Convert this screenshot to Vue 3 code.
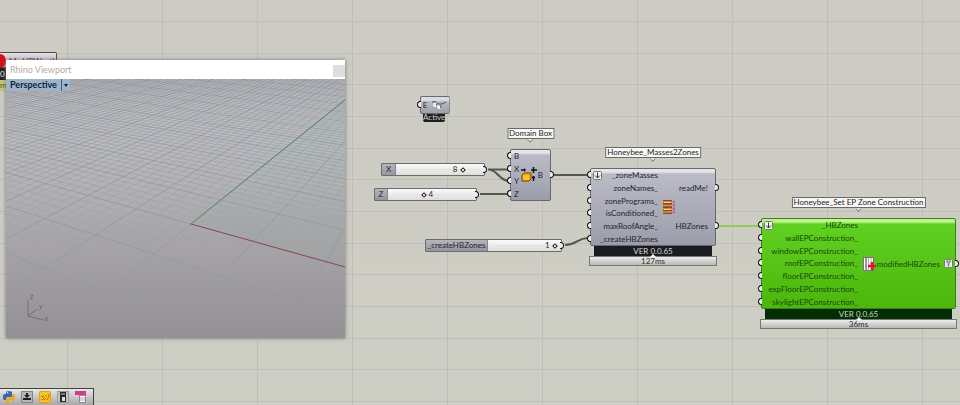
<script setup>
import { ref } from 'vue'

const components = [
  {
    id: 'box', x: 510, y: 149, w: 41, h: 52, title: 'Domain Box', icon: 'box',
    inputs: ['B', 'X', 'Y', 'Z'], outputs: [{ name: 'B', row: 0, span: 4 }],
  },
  {
    id: 'masses', x: 590, y: 168, w: 126, h: 78, title: 'Honeybee_Masses2Zones', icon: 'masses', wide: true,
    inputs: ['_zoneMasses', 'zoneNames_', 'zonePrograms_', 'isConditioned_', 'maxRoofAngle_', '_createHBZones'],
    outputs: [{ name: 'readMe!', row: 1, span: 1 }, { name: 'HBZones', row: 4, span: 1 }],
    version: 'VER 0.0.65', time: '127ms',
  },
  {
    id: 'construction', x: 761, y: 218, w: 195, h: 91, title: 'Honeybee_Set EP Zone Construction', icon: 'construction', wide: true, green: true,
    inputs: ['_HBZones', 'wallEPConstruction_', 'windowEPConstruction_', 'roofEPConstruction_', 'floorEPConstruction_', 'expFloorEPConstruction_', 'skylightEPConstruction_'],
    outputs: [{ name: 'modifiedHBZones', row: 0, span: 7, flatten: true }],
    version: 'VER 0.0.65', time: '36ms',
  },
]

const sliders = ref([
  { id: 'x', label: 'X', value: 8, max: 10, x: 381, y: 163, w: 104, labelWidth: 14, side: 'before' },
  { id: 'z', label: 'Z', value: 4, max: 10, x: 374, y: 188, w: 103, labelWidth: 13, side: 'after' },
  { id: 'create', label: '_createHBZones', value: 1, max: 1, x: 425, y: 239, w: 137, labelWidth: 62, side: 'before' },
])

const tools = ['python', 'upload', 'bees', 'disk', 'cluster']

/* Perspective ground grid: origin plus one vanishing point for each axis. */
const origin = [185, 145]
const vanishX = [-686, -97]
const vanishY = [484, -97]
const project = (a, b) => {
  const d = 1 + a + b
  return [0, 1].map((i) => ((origin[i] + a * vanishX[i] + b * vanishY[i]) / d).toFixed(1)).join(' ')
}
const range = (from, to) => Array.from({ length: to - from + 1 }, (_, i) => from + i)
const stepA = 0.0134
const stepB = 0.0221
const gridA = range(-13, 64).map((n) => ({ major: n % 5 === 0, d: `M${project(n * stepA, -0.33)}L${project(n * stepA, 1.6)}` }))
const gridB = range(-13, 70).map((n) => ({ major: n % 5 === 0, d: `M${project(-0.19, n * stepB)}L${project(0.9, n * stepB)}` }))
const lines = [...gridA, ...gridB]
const minor = lines.filter((l) => !l.major).map((l) => l.d).join('')
const major = lines.filter((l) => l.major).map((l) => l.d).join('')
</script>

<template>
  <main class="canvas">
    <svg class="wires" aria-hidden="true">
      <path d="M488 169.500H509M488 169.500C498 169.500 499 181 509 181M480 194H509M553 175H588M565 245C577 245 577 238 588 238" />
      <path class="wire-green" d="M719 226H759" />
    </svg>

    <div class="hidden-node">
      <span class="hidden-name">My HBWeather</span>
      <i class="error"></i>
      <span class="hidden-version">0</span>
      <span class="hidden-time">m</span>
    </div>

    <div class="preview">
      <i class="port in"></i>
      <div class="preview-body">
        <span>E</span>
        <svg width="16" height="10" viewBox="0 0 16 10" aria-hidden="true">
          <path d="M1 2Q5 0 7 4Q11 5 15 2" fill="none" stroke="#50555d" />
          <circle cx="4" cy="5" r="2" fill="#f4f7fa" /><circle cx="8" cy="7" r="2" fill="#f4f7fa" />
          <path d="M5 4L6 6M9 5L10 8" stroke="#565b63" />
        </svg>
      </div>
      <div class="preview-state">Active</div>
    </div>

    <div v-for="s in sliders" :key="s.id" class="slider" :style="{ left: s.x + 'px', top: s.y + 'px', width: s.w + 'px' }">
      <label :for="'slider-' + s.id" :style="{ width: s.labelWidth + 'px' }">{{ s.label }}</label>
      <div class="track">
        <input :id="'slider-' + s.id" v-model.number="s.value" type="range" min="0" :max="s.max" />
        <div class="scale">
          <output :class="s.side" :style="{ left: (s.value / s.max) * 100 + '%' }">{{ s.value }}</output>
        </div>
      </div>
      <i class="port out"></i>
    </div>

    <section
      v-for="c in components" :key="c.id" class="node" :class="{ green: c.green, wide: c.wide }"
      :style="{ left: c.x + 'px', top: c.y + 'px', width: c.w + 'px' }"
    >
      <h2 class="tag">{{ c.title }}</h2>
      <div class="body" :style="{ height: c.h + 'px' }">
        <ul class="inputs">
          <li v-for="(name, i) in c.inputs" :key="name">
            <i class="port in"></i>
            <svg v-if="c.wide && i === 0" class="arrow" width="9" height="9" viewBox="0 0 9 9" aria-hidden="true">
              <rect x=".5" y=".5" width="8" height="8" rx="1" fill="#eef0ee" stroke="#747b78" />
              <path d="M4.500 1.500V7M2 4.500L4.500 7L7 4.500" fill="none" stroke="#333" />
            </svg>
            <span>{{ name }}</span>
          </li>
        </ul>
        <div class="glyph">
          <svg v-if="c.icon === 'box'" width="16" height="16" viewBox="0 0 16 16" aria-hidden="true">
            <path d="M0 3H4M12.500 0V6M10 3H16M12.500 9V14M11 10.500H14" stroke="#111" stroke-width="1.500" />
            <path d="M3 1L5 3L3 5Z" fill="#111" />
            <path d="M1 8L3 6H10V12L8 14H1Z" fill="#f3a900" stroke="#6d4700" />
            <path d="M2 8.500H8V13H2Z" fill="#ffc62b" />
          </svg>
          <svg v-else-if="c.icon === 'masses'" width="14" height="14" viewBox="0 0 14 14" aria-hidden="true">
            <path d="M1 0H10V14H1Z" fill="#84482a" />
            <path d="M1 2H10M1 5.500H10M1 9H10M1 12H10" stroke="#e8984a" stroke-width="1.500" />
            <path d="M2 2.500H9M2 9.500H9" stroke="#f8db8b" />
            <path d="M12 1V13M10.500 1.500H13M10.500 5H13M10.500 9H13M10.500 12.500H13" stroke="#c0605a" fill="none" />
          </svg>
          <svg v-else width="13" height="14" viewBox="0 0 13 14" aria-hidden="true">
            <rect x=".5" y=".5" width="10" height="13" fill="#fff" stroke="#777" />
            <path d="M3 1V13" stroke="#2d2d2d" />
            <path d="M5.500 1V13M8 1V7" stroke="#c9a0a0" />
            <path d="M9 5V13M5 9H13" stroke="#e01822" stroke-width="2.500" />
          </svg>
        </div>
        <ul class="outputs" :style="{ gridTemplateRows: `repeat(${c.inputs.length}, 1fr)` }">
          <li v-for="o in c.outputs" :key="o.name" :style="{ gridRow: `${o.row + 1} / span ${o.span}` }">
            <span>{{ o.name }}</span>
            <svg v-if="o.flatten" class="flatten" width="9" height="9" viewBox="0 0 9 9" aria-hidden="true">
              <rect x=".5" y=".5" width="8" height="8" rx="1" fill="#eef0ee" stroke="#747b78" />
              <path d="M2 2H7L5 4.500V7H4V4.500Z" fill="#a9b3bb" stroke="#5a6469" stroke-width=".6" />
            </svg>
            <i class="port out"></i>
          </li>
        </ul>
      </div>
      <div v-if="c.version" class="version">{{ c.version }}</div>
      <div v-if="c.time" class="time">{{ c.time }}</div>
    </section>

    <section class="viewport">
      <header>
        <span>Rhino Viewport</span>
        <button class="close" type="button" aria-label="Close"></button>
      </header>
      <div class="scene">
        <svg class="ground" viewBox="0 0 339 259" preserveAspectRatio="xMinYMin slice" aria-hidden="true">
          <defs>
            <linearGradient id="fade" x1="0" y1="0" x2="0" y2="1">
              <stop offset="0" stop-color="#fff" /><stop offset=".5" stop-color="#aaa" />
              <stop offset=".72" stop-color="#555" /><stop offset=".88" stop-color="#000" />
            </linearGradient>
            <linearGradient id="fadeMinor" x1="0" y1="0" x2="0" y2="1">
              <stop offset="0" stop-color="#fff" /><stop offset=".35" stop-color="#bbb" />
              <stop offset=".65" stop-color="#000" />
            </linearGradient>
            <mask id="maskMajor" maskUnits="userSpaceOnUse" x="0" y="0" width="339" height="259"><rect width="339" height="259" fill="url(#fade)" /></mask>
            <mask id="maskMinor" maskUnits="userSpaceOnUse" x="0" y="0" width="339" height="259"><rect width="339" height="259" fill="url(#fadeMinor)" /></mask>
          </defs>
          <g mask="url(#maskMinor)"><path class="minor" :d="minor" /></g>
          <g mask="url(#maskMajor)"><path class="major" :d="major" /></g>
          <path d="M185 145L339 21V188Z" fill="#7fae86" opacity=".08" />
          <path d="M185 145L339 21" stroke="#4f8a5c" />
          <path d="M185 145L339 188" stroke="#8e4850" />
          <g class="axes">
            <path d="M22 237V221M22 237L38 241M22 237L31 230" />
            <path d="M24 216H27L24 220H27M33 226L35 228L37 226M35 228L34 231M39 238L42 242M42 238L39 242" />
          </g>
        </svg>
        <div class="view-name">
          <button type="button">Perspective</button>
          <button class="view-menu" type="button" aria-label="View menu"><i></i></button>
        </div>
      </div>
    </section>

    <nav class="toolbar">
      <button v-for="t in tools" :key="t" type="button" :aria-label="t">
        <svg width="12" height="12" viewBox="0 0 12 12" aria-hidden="true">
          <g v-if="t === 'python'">
            <path d="M3 3V1.500Q3 0 6 0T9 1.500V5Q9 6 8 6H4.500Q3 6 3 9H1.500Q0 9 0 6T1.500 3H6V2.500Z" fill="#3268ab" />
            <path d="M9 9V10.500Q9 12 6 12T3 10.500V7.500Q3 6.500 4.500 6.500H7.500Q9.500 6.500 9.500 3H10.500Q12 3 12 6T10.500 9H6V9.500Z" fill="#f0a52b" />
            <circle cx="4.500" cy="1.500" r=".6" fill="#fff" /><circle cx="7.500" cy="10.500" r=".6" fill="#fff" />
          </g>
          <g v-else-if="t === 'upload'">
            <rect x=".5" y=".5" width="11" height="11" fill="#b7b7b5" stroke="#858585" />
            <path d="M5 2H7V4H9L6 7L3 4H5ZM2 7H10V9H2Z" fill="#202020" />
          </g>
          <g v-else-if="t === 'bees'">
            <rect x=".5" y=".5" width="11" height="11" rx="1" fill="#f8c51c" stroke="#dfa414" />
            <path d="M2 9Q5 9 5 6M5 9Q8 8 7 4M8 9Q10 7 10 3M2 6L5 5" fill="none" stroke="#c26f0a" />
            <path d="M3 8L4 7M6 7L7 6" stroke="#fff0a8" />
          </g>
          <g v-else-if="t === 'disk'">
            <rect x=".5" y=".5" width="11" height="11" fill="#c4c4c4" stroke="#999" />
            <path d="M3 1H9V11H3Z" fill="#292929" /><path d="M4 2H8V4H4Z" fill="#777" /><path d="M5 6H8V10H5Z" fill="#e0e0e0" />
          </g>
          <g v-else>
            <path d="M0 0H11V4H0Z" fill="#d43b83" /><path d="M2 4H6V7H2Z" fill="#f3b8d1" />
            <rect x="4.500" y="4.500" width="6" height="7" fill="#fff" stroke="#8d8790" />
            <path d="M5 7H10M5 9H10" stroke="#c798af" />
          </g>
        </svg>
      </button>
    </nav>
  </main>
</template>

<style>
body { margin: 0; }
</style>

<style scoped>
.canvas {
  position: relative;
  min-height: 100vh;
  overflow: hidden;
  font: 8px/10px Lato, "Open Sans", sans-serif;
  color: #24262b;
  background:
    repeating-linear-gradient(90deg, transparent 0 94px, #c0beb6 94px 95px) -27px 0,
    repeating-linear-gradient(180deg, transparent 0 21px, #c0bfb7 21px 22px, transparent 22px 53px, #c0bfb7 53px 54px, transparent 54px 84px, #c0bfb7 84px 85px, transparent 85px 95px),
    linear-gradient(#cdcbc5, #cdcec3);
}
.wires { position: absolute; inset: 0; width: 100%; height: 100%; fill: none; stroke: #55564e; stroke-width: 2; }
.wire-green { stroke: #95ca62; }
ul { list-style: none; margin: 0; padding: 0; }
button { border: 0; padding: 0; margin: 0; background: none; font: inherit; color: inherit; }

.port { position: absolute; top: 50%; width: 4px; height: 7px; margin-top: -4px; box-sizing: border-box; border: 1px solid #111; background: #eee; }
.port.in { left: -3px; border-width: 1px 0 1px 1px; border-radius: 4px 0 0 4px; }
.port.out { right: -3px; border-width: 1px 1px 1px 0; border-radius: 0 4px 4px 0; }

.node { position: absolute; }
.tag {
  position: absolute; left: 50%; bottom: 100%; transform: translateX(-50%);
  margin: 0 0 10px; padding: 0 1px; border: 1px solid #696969; background: #f8f7f4;
  font: inherit; line-height: 9px; white-space: nowrap;
}
.tag::after {
  content: ""; position: absolute; left: 50%; top: 100%; width: 4px; height: 4px; margin: -1px 0 0 -3px;
  border: solid #696969; border-width: 0 1px 1px 0; background: #f8f7f4; transform: rotate(45deg);
  clip-path: polygon(100% 0, 100% 100%, 0 100%);
}
.body {
  display: grid; grid-template-columns: auto auto minmax(0, 1fr); position: relative; box-sizing: border-box;
  border: 1px solid #65666f; border-radius: 2px;
  background: linear-gradient(#e4e4e9 0 3px, #babbc5 5px, #9c9dab);
}
.wide .body { grid-template-columns: 67px 20px minmax(0, 1fr); }
.green .body { grid-template-columns: 96px 21px minmax(0, 1fr); border-color: #3f7d1c; background: linear-gradient(#bdf58c 0 3px, #60d021 5px, #4cb60b); }
.green { color: #154a08; }
.green .tag, .green .time { color: #24262b; }
.inputs { display: grid; grid-auto-rows: 1fr; }
.inputs li, .outputs li { position: relative; display: flex; align-items: center; }
.inputs li { padding-left: 3px; }
.wide .inputs li { justify-content: flex-end; padding-left: 0; }
.inputs .port { left: -4px; }
.arrow { position: absolute; left: 2px; top: 2px; }
.glyph { display: grid; place-items: center; padding-left: 2px; }
.outputs { display: grid; grid-template-columns: minmax(0, 1fr); }
.outputs li { justify-content: flex-end; padding-right: 7px; }
.outputs .port { right: -4px; }
.flatten { flex: none; margin: 0 -5px 0 4px; }
.version { margin: 0 4px; background: #1b1c1f; color: #d9d9d9; text-align: center; height: 10px; }
.green .version { background: #032e03; color: #c4d8c2; }
.time {
  position: relative; box-sizing: border-box; height: 10px; line-height: 8px; margin: 0 -1px; border: 1px solid #777874; color: #333;
  background: linear-gradient(#ededeb, #b8b9b5); text-align: center;
}
.time::before { content: ""; position: absolute; left: 50%; top: -3px; margin-left: -3px; border: solid transparent; border-width: 0 3px 3px; border-bottom-color: #f4f4f2; }

.slider { position: absolute; display: flex; box-sizing: border-box; height: 13px; border: 1px solid #6c6c6c; border-radius: 1px; }
.slider label { flex: none; box-sizing: border-box; border-right: 1px solid #888; background: linear-gradient(#b4b5bd, #94959f); text-align: center; line-height: 11px; }
.track { position: relative; flex: 1; min-width: 0; padding: 0 4px; background: linear-gradient(#fafafa, #deddda); }
.track input { display: block; width: 100%; height: 11px; margin: 0; appearance: none; background: linear-gradient(#e4e3df, #e4e3df) center / 100% 1px no-repeat; }
.track input::-webkit-slider-thumb { appearance: none; width: 4px; height: 4px; box-sizing: border-box; border: 1px solid #151515; background: #fff; transform: rotate(45deg); }
.scale { position: absolute; inset: 0 6px; pointer-events: none; }
.scale output { position: absolute; line-height: 11px; }
.scale .before { transform: translateX(-10px); }
.scale .after { transform: translateX(4px); }

.preview { position: absolute; left: 420px; top: 96px; width: 30px; }
.preview .port { top: 9px; }
.preview-body {
  display: flex; align-items: center; justify-content: space-around; box-sizing: border-box; height: 18px;
  border: 1px solid #686a70; border-right-style: dotted; border-radius: 2px; background: linear-gradient(#dcdde0 0 3px, #b6b8bf 5px, #9fa1aa);
}
.preview-state { margin: 0 5px 0 3px; height: 8px; line-height: 7px; border-radius: 0 0 2px 2px; background: #1c1d1f; color: #d0d0d0; text-align: center; }

.hidden-node { position: absolute; left: 0; top: 52px; width: 57px; height: 39px; }
.hidden-name { display: block; box-sizing: border-box; height: 16px; padding: 3px 0 0 9px; border: 1px solid #4e4b50; border-left: 0; border-radius: 0 2px 0 0; background: linear-gradient(#e6dfe6, #b7afb9); white-space: nowrap; }
.error { position: absolute; left: -6px; top: 2px; width: 12px; height: 14px; border-radius: 50%; background: #d5101b; }
.hidden-version { display: block; height: 12px; width: 6px; background: #232226; color: #eee; line-height: 12px; }
.hidden-time { display: block; height: 11px; width: 6px; background: #c7c77b; color: #51501f; }

.viewport { position: absolute; left: 6px; top: 60px; width: 339px; box-shadow: 0 0 4px #77756f; }
.viewport header { display: flex; align-items: center; justify-content: space-between; height: 19px; padding-left: 4px; background: #fff; color: #b4a9ab; font-size: 9px; }
.close { width: 12px; height: 12px; margin-top: 3px; background: #dedede; }
.scene { position: relative; height: 259px; background: linear-gradient(#c3c5ca, #b7b8bd 30%, #a5a3a8 65%, #939196); }
.ground { display: block; width: 100%; height: 100%; fill: none; }
.minor { stroke: #7d8087; stroke-width: .6; opacity: .6; }
.major { stroke: #73757c; stroke-width: .8; opacity: .6; }
.axes { stroke: #69676c; stroke-width: .8; }
.view-name { position: absolute; left: 0; top: 0; display: flex; height: 12px; background: #9db4ca; color: #101f31; font: bold 9px/12px Lato, "Open Sans", sans-serif; }
.view-name button { padding: 0 4px; }
.view-name .view-menu { padding: 0 2px; border-left: 1px solid #46617d; }
.view-menu i { display: block; border: solid transparent; border-width: 3px 2px 0; border-top-color: #101f31; }

.toolbar { position: absolute; left: 0; bottom: 0; display: flex; align-items: center; gap: 6px; height: 16px; padding: 0 6px 0 3px; border: solid #414246; border-width: 1px 1px 0 0; background: linear-gradient(#e8e8e8, #a8a8ab); }
.toolbar button { display: grid; width: 12px; height: 12px; }
</style>
